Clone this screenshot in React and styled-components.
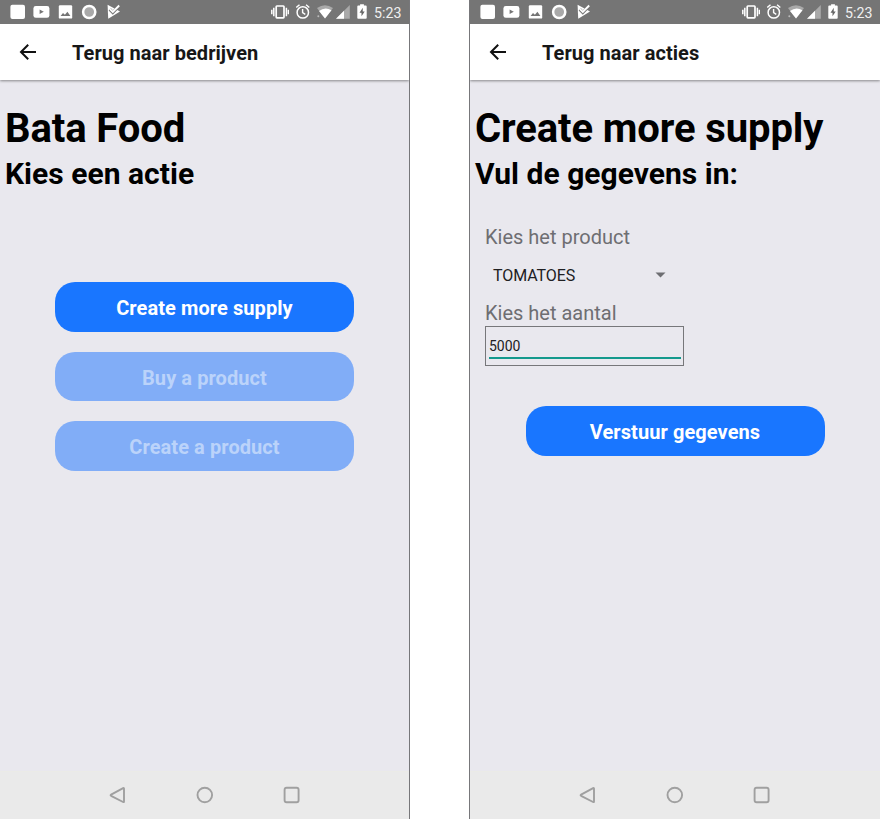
import React from "react";
import styled, { createGlobalStyle } from "styled-components";

const GlobalStyle = createGlobalStyle`
  * { box-sizing: border-box; }
  body { margin: 0; background: #fff; font-family: Roboto, "Liberation Sans", sans-serif; }
`;

const Board = styled.main`
  display: flex;
  justify-content: space-between;
  width: 880px;
  height: 819px;
  overflow: hidden;
`;

const Phone = styled.section`
  display: flex;
  flex-direction: column;
  width: ${(p) => (p.$edge === "left" ? 411 : 410)}px;
  background: #e9e8ee;
  border-${(p) => p.$edge}: 1px solid #77777a;
`;

const StatusBar = styled.div`
  display: flex;
  align-items: center;
  flex: none;
  height: 24px;
  padding: 0 8px 0 5px;
  background: #757575;
  color: #fff;
`;

const Notifications = styled.div`
  display: flex;
  margin-right: auto;
`;

const Glyph = styled.svg`
  display: block;
  flex: none;
  width: ${(p) => p.$w}px;
  height: 24px;
  margin-left: ${(p) => p.$gap || 0}px;
`;

const Clock = styled.span`
  width: 27px;
  margin-left: 7px;
  font-size: 14.2px;
  line-height: 24px;
  padding-top: 1px;
  color: #f0f0f0;
  white-space: nowrap;
`;

const Header = styled.header`
  display: flex;
  align-items: center;
  flex: none;
  height: 55.5px;
  padding-left: 16px;
  background: #fff;
  box-shadow: 0 1px 2.5px rgba(0, 0, 0, 0.42);
  clip-path: inset(0 0 -5px 0);
`;

const BackButton = styled.button`
  display: flex;
  width: 24px;
  height: 24px;
  margin: 0 32px 0 0;
  padding: 0;
  border: 0;
  background: none;
`;

const HeaderTitle = styled.span`
  font-size: 20px;
  line-height: 24px;
  font-weight: 700;
  letter-spacing: 0.05px;
  color: #171717;
  padding-top: 2px;
`;

const Content = styled.div`
  flex: 1;
  padding-top: 25.5px;
`;

const Title = styled.h1`
  margin: 0 0 0 5px;
  font-size: 40px;
  line-height: 48px;
  font-weight: 700;
  letter-spacing: -0.11px;
  color: #000;
`;

const Subtitle = styled.h2`
  margin: 3px 0 0 5px;
  font-size: 30px;
  line-height: 36px;
  font-weight: 700;
  letter-spacing: 0.03px;
  color: #000;
`;

const Actions = styled.div`
  display: flex;
  flex-direction: column;
  gap: 20px;
  margin: ${(p) => p.$top}px 0 0 ${(p) => p.$left}px;
`;

const ActionButton = styled.button`
  width: 299px;
  height: 49.7px;
  padding: 2px 0 0;
  border: 0;
  border-radius: 20px;
  background: ${(p) => (p.disabled ? "#81adf7" : "#1976ff")};
  color: ${(p) => (p.disabled ? "#bbd3fa" : "#fff")};
  font: 700 20px/24px Roboto, "Liberation Sans", sans-serif;
  letter-spacing: 0.08px;
`;

const Form = styled.div`
  display: flex;
  flex-direction: column;
  margin: 33px 0 0 15px;
  width: 199px;
`;

const Label = styled.label`
  font-size: 20px;
  line-height: 24px;
  color: #6e6e72;
`;

const Picker = styled.div`
  display: flex;
  align-items: center;
  justify-content: space-between;
  height: 52px;
  padding: 0 18px 0 8px;
  font-size: 16px;
  letter-spacing: -0.08px;
  color: #202022;
`;

const AmountBox = styled.div`
  height: 40px;
  margin-top: 1px;
  padding: 7px 3px 0;
  border: 1px solid #77777a;
`;

const AmountInput = styled.input`
  display: block;
  width: 192px;
  height: 25px;
  padding: 0;
  border: 0;
  border-bottom: 2px solid #14998d;
  outline: none;
  background: transparent;
  color: #202022;
  font: 400 14px/22px Roboto, "Liberation Sans", sans-serif;
`;

const NavBar = styled.nav`
  display: flex;
  align-items: center;
  flex: none;
  height: 48px;
  padding: 0 0 2px 106px;
  gap: 63px;
  background: #eaeaea;
  border-top: 1px solid #ebebe7;
`;

const stroke = { fill: "none", stroke: "currentColor" };

const StatusIcons = () => (
  <StatusBar>
    <Notifications>
      <Glyph $w={24} viewBox="0 0 24 24">
        <rect x="5.4" y="4.8" width="14.6" height="14.2" rx="2" fill="#fff" />
      </Glyph>
      <Glyph $w={24} viewBox="0 0 24 24">
        <rect x="4.4" y="6" width="16" height="11.8" rx="2.4" fill="#fff" />
        <path d="M10.6 9.5v4.6l4.2-2.3z" fill="#757575" />
      </Glyph>
      <Glyph $w={24} viewBox="0 0 24 24">
        <rect x="5.8" y="5.2" width="13.4" height="13.4" rx="1.2" fill="#fff" />
        <path d="M7.6 16l2.4-3 1.9 1.7 2.5-2.9 3 4.2z" fill="#757575" />
      </Glyph>
      <Glyph $w={24} viewBox="0 0 24 24">
        <circle cx="12.2" cy="12" r="6.1" fill="#a9a9a9" stroke="#fff" strokeWidth="2.5" />
      </Glyph>
      <Glyph $w={24} viewBox="0 0 24 24">
        <path d="M6.6 4.8L19 11.4 7.2 18.8z" fill="#fff" />
        <path d="M8.8 9.4l3 3.1 6.8-7" fill="none" stroke="#757575" strokeWidth="3.2" />
        <path d="M9 9.2l2.8 2.8 6.4-6.5" fill="none" stroke="#fff" strokeWidth="1.9" />
      </Glyph>
    </Notifications>
    <Glyph $w={18} viewBox="0 0 18 24">
      <rect x="5.2" y="6" width="7.8" height="11.8" {...stroke} strokeWidth="1.7" rx=".7" />
      <path d="M2.8 7.8v8.4M.8 9.8v4.4M15.4 7.8v8.4M17.4 9.8v4.4" {...stroke} strokeWidth="1.5" />
    </Glyph>
    <Glyph $w={14} $gap={7} viewBox="0 0 14 24">
      <circle cx="6.8" cy="12.4" r="5.7" {...stroke} strokeWidth="1.5" />
      <path d="M6.6 9.1v3.6l2.7 1.6M.3 7.5l3.2-2.8M13.3 7.5l-3.2-2.8" {...stroke} strokeWidth="1.4" />
    </Glyph>
    <Glyph $w={16} $gap={7} viewBox="0 0 16 24">
      <path d="M0 8.1Q8 2.2 16 8.1L8 18.6z" fill="#a9a9a9" />
      <path d="M0 11Q1 13.5 2.5 13.4L8 18.6 4 18.6H0z" fill="#757575" />
      <path d="M2 11Q8 6.2 14.5 10.2L8 18.6z" fill="#fff" />
      <circle cx="1.3" cy="16.3" r="1" fill="#bbb" />
    </Glyph>
    <Glyph $w={14} $gap={3} viewBox="0 0 14 24">
      <path d="M0 18.8L13.8 5v13.8z" fill="#a9a9a9" />
      <path d="M0 18.8L8 10.8v8z" fill="#fff" />
    </Glyph>
    <Glyph $w={10} $gap={7.5} viewBox="0 0 10 24">
      <path d="M1.2 5.6h1.9V4.3h3.8v1.3h1.9q.9 0 .9.8v11.6q0 .8-.9.8H1.2q-.9 0-.9-.8V6.4q0-.8.9-.8z" fill="#fff" />
      <path d="M5.8 7.7l-3.3 5h2v3.5l3.2-4.8h-2z" fill="#666" />
    </Glyph>
    <Clock>5:23</Clock>
  </StatusBar>
);

const AppHeader = ({ title }) => (
  <Header>
    <BackButton aria-label={title}>
      <svg width="24" height="24" viewBox="0 0 24 24">
        <path d="M20 12H5.4M12.2 4.8L5 12l7.2 7.2" fill="none" stroke="#111" strokeWidth="2" />
      </svg>
    </BackButton>
    <HeaderTitle>{title}</HeaderTitle>
  </Header>
);

const AndroidNav = () => (
  <NavBar>
    {[
      <path key="back" d="M18 5.5v13q0 1-.9.5L5.1 12.8q-1-.6 0-1.2l12-6.5q.9-.4.9.4z" />,
      <circle key="home" cx="11.8" cy="12" r="7.3" />,
      <rect key="recent" x="4.6" y="4.8" width="14" height="14.4" rx="2" />,
    ].map((shape) => (
      <svg key={shape.key} width="24" height="24" viewBox="0 0 24 24" fill="none" stroke="#a0a0a0" strokeWidth="1.9">
        {shape}
      </svg>
    ))}
  </NavBar>
);

export default function App() {
  return (
    <>
      <GlobalStyle />
      <Board>
        <Phone $edge="right">
          <StatusIcons />
          <AppHeader title="Terug naar bedrijven" />
          <Content>
            <Title>Bata Food</Title>
            <Subtitle>Kies een actie</Subtitle>
            <Actions $top={90} $left={55}>
              <ActionButton>Create more supply</ActionButton>
              <ActionButton disabled>Buy a product</ActionButton>
              <ActionButton disabled>Create a product</ActionButton>
            </Actions>
          </Content>
          <AndroidNav />
        </Phone>
        <Phone $edge="left">
          <StatusIcons />
          <AppHeader title="Terug naar acties" />
          <Content>
            <Title>Create more supply</Title>
            <Subtitle>Vul de gegevens in:</Subtitle>
            <Form>
              <Label>Kies het product</Label>
              <Picker>
                TOMATOES
                <svg width="11" height="6" viewBox="0 0 11 6">
                  <path d="M.5.5h10l-5 5z" fill="#6e6e72" />
                </svg>
              </Picker>
              <Label htmlFor="amount">Kies het aantal</Label>
              <AmountBox>
                <AmountInput id="amount" defaultValue="5000" />
              </AmountBox>
            </Form>
            <Actions $top={40} $left={55.5}>
              <ActionButton>Verstuur gegevens</ActionButton>
            </Actions>
          </Content>
          <AndroidNav />
        </Phone>
      </Board>
    </>
  );
}
